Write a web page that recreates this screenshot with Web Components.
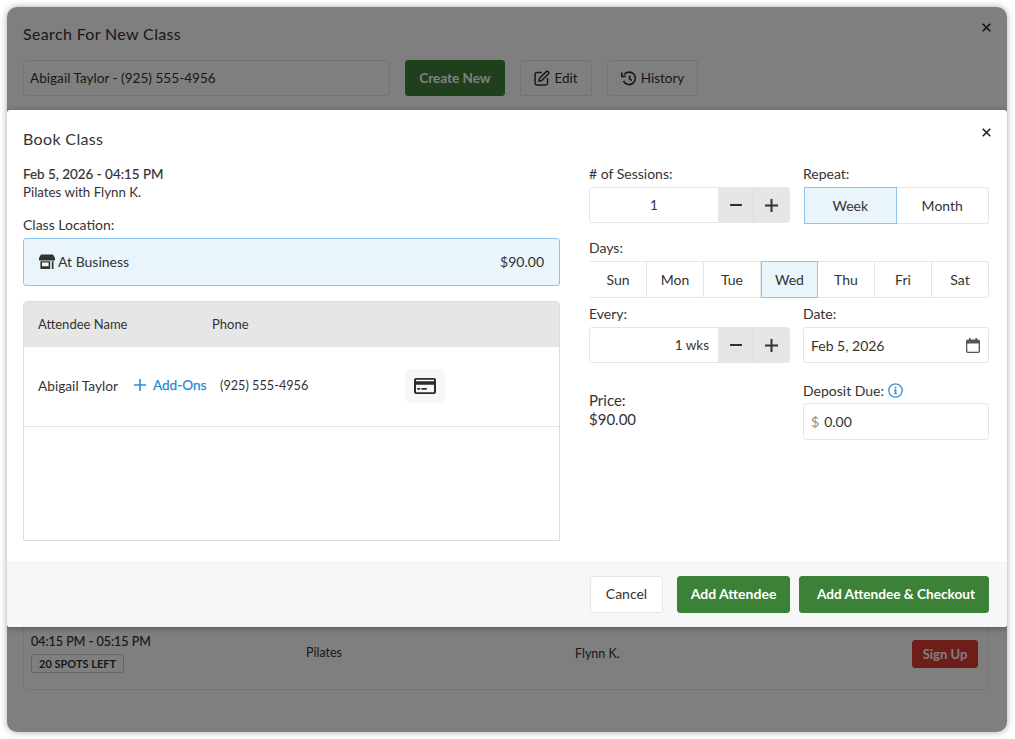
<!DOCTYPE html>
<html>
<head>
<meta charset="utf-8">
<title>Book Class</title>
<style>
    html, body { margin: 0; background: #fff; }
    body {
        padding: 7px 8px 7px 7px;
        font-family: 'Lato', 'Liberation Sans', sans-serif;
        font-size: 14px;
        color: #333;
    }
</style>
</head>
<body>
<class-window></class-window>

<script>
const ICONS = {
    close: `<svg width="9" height="9" viewBox="0 0 10 10"><path d="M.8.8l8.4 8.4M9.2.8L.8 9.2" stroke="currentColor" stroke-width="1.8" fill="none"/></svg>`,
    edit: `<svg width="16" height="16" viewBox="0 0 15 15" fill="none" stroke="currentColor" stroke-width="1.4"><path d="M7.4 2.3H2.6A1.6 1.6 0 0 0 1 3.9v8.5A1.6 1.6 0 0 0 2.6 14h8.5a1.6 1.6 0 0 0 1.6-1.6V7.6"/><path d="M5.2 7.8l6.3-6.3a1.2 1.2 0 0 1 1.7 0l.4.4a1.2 1.2 0 0 1 0 1.7L7.3 9.9l-2.6.5z"/></svg>`,
    history: `<svg width="16" height="15" viewBox="0 0 16 15" fill="none" stroke="currentColor" stroke-width="1.7"><path d="M3.2 3.6A6.2 6.2 0 1 1 2.5 9.8"/><path d="M.8 1.4v3.9h3.9"/><path d="M8.6 4.4v3.5l2.3 1.6"/></svg>`,
    store: `<svg width="16" height="15" viewBox="0 0 16 15"><path fill="currentColor" d="M2 .5h12l2 3.6v2.4H0V4.1z"/><path fill="currentColor" fill-rule="evenodd" d="M1.4 7.2h9.8v7.8H1.4zM3 8.6v3.6h6.6V8.6z"/><rect fill="currentColor" x="12.8" y="7.2" width="1.7" height="7.8"/></svg>`,
    card: `<svg width="22" height="16" viewBox="0 0 22 16"><path fill="currentColor" fill-rule="evenodd" d="M2 0h18a2 2 0 0 1 2 2v12a2 2 0 0 1-2 2H2a2 2 0 0 1-2-2V2a2 2 0 0 1 2-2zm0 1.7v1.6h18V1.7zm0 5v7.6h18V6.7z"/><rect fill="currentColor" x="3.2" y="10" width="3" height="1.7"/><rect fill="currentColor" x="7.4" y="10" width="5.4" height="1.7"/></svg>`,
    calendar: `<svg width="14" height="15" viewBox="0 0 14 15"><path fill="currentColor" fill-rule="evenodd" d="M3 0h1.6v1.6h4.8V0H11v1.6h1.2A1.8 1.8 0 0 1 14 3.4v9.8a1.8 1.8 0 0 1-1.8 1.8H1.8A1.8 1.8 0 0 1 0 13.2V3.4a1.8 1.8 0 0 1 1.8-1.8H3zM1.3 5.4v7.6c0 .4.3.7.7.7h10c.4 0 .7-.3.7-.7V5.4z"/></svg>`,
    info: `<svg width="15" height="15" viewBox="0 0 15 15"><circle cx="7.5" cy="7.5" r="6.7" fill="none" stroke="currentColor" stroke-width="1.3"/><circle cx="7.5" cy="4.4" r="1" fill="currentColor"/><path fill="currentColor" d="M6.1 6.3h2.3v3.9h.7v1.1H5.9v-1.1h.8V7.4h-.6z"/></svg>`,
    plus: `<svg width="12" height="12" viewBox="0 0 12 12"><path d="M6 0v12M0 6h12" stroke="currentColor" stroke-width="1.6" fill="none"/></svg>`,
    plusBold: `<svg width="13" height="13" viewBox="0 0 13 13"><path d="M6.5 0v13M0 6.5h13" stroke="currentColor" stroke-width="2" fill="none"/></svg>`,
    minus: `<svg width="12" height="12" viewBox="0 0 12 12"><path d="M0 6h12" stroke="currentColor" stroke-width="2" fill="none"/></svg>`
};

class UiButton extends HTMLElement {
    constructor() {
        super();
        this.attachShadow({ mode: 'open' });
    }

    connectedCallback() {
        this.shadowRoot.innerHTML = `
            <style>
                :host {
                    display: inline-flex;
                    box-sizing: border-box;
                    align-items: center;
                    justify-content: center;
                    gap: 4px;
                    height: 37px;
                    padding: 0 14px;
                    border-radius: 3px;
                    border: 1px solid #e6e6e6;
                    background: #fff;
                    color: #333;
                    font-size: 13.5px;
                    white-space: nowrap;
                }
                :host([kind="green"]) {
                    background: #3c8138;
                    border-color: #3c8138;
                    color: #fff;
                    font-weight: 700;
                }
                :host([kind="red"]) {
                    background: #dc3a33;
                    border-color: #dc3a33;
                    color: #fff;
                    font-size: 13px;
                    font-weight: 700;
                }
            </style>
            <slot></slot>
        `;
    }
}

class StepperInput extends HTMLElement {
    constructor() {
        super();
        this.attachShadow({ mode: 'open' });
    }

    connectedCallback() {
        const align = this.getAttribute('align') || 'center';
        this.shadowRoot.innerHTML = `
            <style>
                :host {
                    display: flex;
                    box-sizing: border-box;
                    height: 36px;
                    border: 1px solid #e6e6e6;
                    border-radius: 3px;
                    overflow: hidden;
                    background: #fff;
                }
                .value {
                    flex: 1;
                    display: flex;
                    align-items: center;
                    justify-content: ${align};
                    padding: 0 9px 1px;
                    font-size: 13.5px;
                }
                .btn {
                    width: 35px;
                    display: flex;
                    align-items: center;
                    justify-content: center;
                    background: #e6e6e6;
                    color: #333;
                }
                .btn + .btn { border-left: 1px solid #dcdcdc; }
            </style>
            <div class="value"><slot></slot></div>
            <div class="btn">${ICONS.minus}</div>
            <div class="btn">${ICONS.plusBold}</div>
        `;
    }
}

class SegmentedPicker extends HTMLElement {
    constructor() {
        super();
        this.attachShadow({ mode: 'open' });
    }

    connectedCallback() {
        const items = this.getAttribute('items').split(',');
        const active = this.getAttribute('active');
        const cells = items.map((item) => `<div class="cell ${item === active ? 'on' : ''}">${item}</div>`).join('');
        this.shadowRoot.innerHTML = `
            <style>
                :host {
                    display: grid;
                    grid-template-columns: repeat(${items.length}, 1fr);
                    box-sizing: border-box;
                    height: 37px;
                    margin-left: 1px;
                    font-size: 14px;
                    border-radius: 3px;
                    background: #fff;
                }
                .cell {
                    display: flex;
                    align-items: center;
                    justify-content: center;
                    border: 1px solid #e6e6e6;
                    border-left-width: 0;
                }
                .cell:first-child { border-left-width: 1px; border-radius: 3px 0 0 3px; }
                .cell:last-child { border-radius: 0 3px 3px 0; }
                .cell.on {
                    background: #e9f4fb;
                    border: 1px solid #8fc5ec;
                }
            </style>
            ${cells}
        `;
    }
}

class FormField extends HTMLElement {
    constructor() {
        super();
        this.attachShadow({ mode: 'open' });
    }

    connectedCallback() {
        this.shadowRoot.innerHTML = `
            <style>
                :host { display: flex; flex-direction: column; gap: 5px; min-width: 0; }
                .label {
                    display: flex;
                    align-items: center;
                    gap: 4px;
                    height: 17px;
                    line-height: 17px;
                    font-size: 14px;
                }
                .info { display: flex; color: #3d8fd6; }
            </style>
            <div class="label">${this.getAttribute('label')}${this.hasAttribute('info') ? `<span class="info">${ICONS.info}</span>` : ''}</div>
            <slot></slot>
        `;
    }
}

class AttendeeTable extends HTMLElement {
    constructor() {
        super();
        this.attachShadow({ mode: 'open' });
    }

    connectedCallback() {
        this.shadowRoot.innerHTML = `
            <style>
                :host {
                    display: block;
                    box-sizing: border-box;
                    height: 240px;
                    border: 1px solid #dcdcdc;
                    border-radius: 4px 4px 0 0;
                    font-size: 13px;
                }
                .head, .row {
                    display: grid;
                    align-items: center;
                    padding-left: 14px;
                    box-sizing: border-box;
                }
                .head {
                    grid-template-columns: 174px 1fr;
                    height: 45px;
                    padding-bottom: 2px;
                    background: #e6e6e6;
                    border-radius: 3px 3px 0 0;
                }
                .row {
                    grid-template-columns: 182px 184px 40px;
                    height: 80px;
                    padding-bottom: 3px;
                    border-bottom: 1px solid #e3e3e3;
                }
                .name { display: flex; align-items: center; gap: 16px; font-size: 13.7px; }
                .addons {
                    display: flex;
                    align-items: center;
                    gap: 7px;
                    color: #2a8bd6;
                    font-size: 13.6px;
                    -webkit-text-stroke: .25px #2a8bd6;
                    white-space: nowrap;
                }
                .phone { font-size: 12.7px; }
                .card {
                    display: flex;
                    align-items: center;
                    justify-content: center;
                    width: 40px;
                    height: 34px;
                    margin: 2px 0 0 1px;
                    border-radius: 5px;
                    background: #f7f7f7;
                    color: #2b2b2b;
                }
            </style>
            <div class="head"><span>Attendee Name</span><span>Phone</span></div>
            <div class="row">
                <div class="name"><span>Abigail Taylor</span><span class="addons">${ICONS.plus}Add-Ons</span></div>
                <span class="phone">(925) 555-4956</span>
                <span class="card">${ICONS.card}</span>
            </div>
        `;
    }
}

class BookClassModal extends HTMLElement {
    constructor() {
        super();
        this.attachShadow({ mode: 'open' });
    }

    connectedCallback() {
        this.shadowRoot.innerHTML = `
            <style>
                :host {
                    position: absolute;
                    top: 103px;
                    left: 0;
                    right: 0;
                    height: 517px;
                    display: flex;
                    flex-direction: column;
                    background: #fff;
                    border-radius: 3px;
                    box-shadow: 0 1px 6px rgba(0, 0, 0, .35);
                    color: #333;
                }
                header {
                    display: flex;
                    justify-content: space-between;
                    align-items: center;
                    height: 56px;
                    padding: 0 17px 0 16px;
                    font-size: 16px;
                    letter-spacing: .35px;
                    margin-bottom: -1px;
                }
                .close { display: flex; color: #222; margin: -12px -1px 0 0; }
                main {
                    flex: 1;
                    display: grid;
                    grid-template-columns: 537px 400px;
                    justify-content: space-between;
                    padding: 0 18px 0 16px;
                    align-items: start;
                }
                .when { line-height: 18px; margin: 0 0 15px; font-size: 13.3px; }
                .when b { font-weight: 400; font-size: 13.4px; display: block; -webkit-text-stroke: .2px #333; }
                .loc-label { line-height: 17px; margin-bottom: 5px; }
                .location {
                    box-sizing: border-box;
                    display: flex;
                    justify-content: space-between;
                    align-items: center;
                    height: 48px;
                    padding: 0 15px 1px;
                    margin-bottom: 15px;
                    background: #e9f4fb;
                    border: 1px solid #8fc5ec;
                    border-radius: 3px;
                }
                .location span { display: flex; align-items: center; gap: 3px; }
                .right {
                    display: grid;
                    grid-template-columns: 201px 186px;
                    column-gap: 13px;
                    row-gap: 7px;
                }
                .wide { grid-column: 1 / -1; margin-top: 8px; }
                .low { margin-top: 11px; }
                .deposit { margin-top: 12px; gap: 4px; }
                .box {
                    box-sizing: border-box;
                    display: flex;
                    align-items: center;
                    justify-content: space-between;
                    height: 37px;
                    padding: 0 7px;
                    background: #fff;
                    border: 1px solid #e6e6e6;
                    border-radius: 3px;
                }
                .box.date { height: 36px; padding-right: 8px; }
                .dollar { color: #8a8a8a; margin-right: 5px; }
                .price { line-height: 19px; padding-top: 10px; font-size: 15px; }
                .cal { display: flex; color: #555; }
                footer {
                    display: flex;
                    justify-content: flex-end;
                    align-items: center;
                    gap: 14px;
                    height: 66px;
                    padding: 1px 18px 0 0;
                    box-sizing: border-box;
                    background: #f7f7f7;
                    border-radius: 0 0 3px 3px;
                }
                footer ui-button { padding-bottom: 2px; }
                footer .last { margin-left: -5px; padding-left: 18px; padding-bottom: 1px; }
            </style>
            <header><span>Book Class</span><span class="close">${ICONS.close}</span></header>
            <main>
                <section>
                    <div class="when"><b>Feb 5, 2026 - 04:15 PM</b>Pilates with Flynn K.</div>
                    <div class="loc-label">Class Location:</div>
                    <div class="location"><span>${ICONS.store}At Business</span><div>$90.00</div></div>
                    <attendee-table></attendee-table>
                </section>
                <section class="right">
                    <form-field label="# of Sessions:"><stepper-input>1</stepper-input></form-field>
                    <form-field label="Repeat:"><segmented-picker items="Week,Month" active="Week"></segmented-picker></form-field>
                    <form-field class="wide" label="Days:"><segmented-picker items="Sun,Mon,Tue,Wed,Thu,Fri,Sat" active="Wed"></segmented-picker></form-field>
                    <form-field label="Every:"><stepper-input align="flex-end">1 wks</stepper-input></form-field>
                    <form-field label="Date:"><div class="box date"><span>Feb 5, 2026</span><span class="cal">${ICONS.calendar}</span></div></form-field>
                    <div class="price low">Price:<br>$90.00</div>
                    <form-field class="deposit" label="Deposit Due:" info><div class="box" style="justify-content:flex-start"><span class="dollar">$</span><span>0.00</span></div></form-field>
                </section>
            </main>
            <footer>
                <ui-button style="width:73px;font-size:14px">Cancel</ui-button>
                <ui-button kind="green" style="width:113px;font-size:14px">Add Attendee</ui-button>
                <ui-button class="last" kind="green" style="width:190px;font-size:13.65px">Add Attendee &amp; Checkout</ui-button>
            </footer>
        `;
    }
}

class SearchPanel extends HTMLElement {
    constructor() {
        super();
        this.attachShadow({ mode: 'open' });
    }

    connectedCallback() {
        this.shadowRoot.innerHTML = `
            <style>
                :host {
                    display: flex;
                    flex-direction: column;
                    height: 100%;
                    box-sizing: border-box;
                    padding: 0 18px 42px 16px;
                    color: #333;
                }
                header {
                    display: flex;
                    justify-content: space-between;
                    align-items: center;
                    height: 53px;
                    font-size: 16px;
                    letter-spacing: .35px;
                }
                .close { display: flex; color: #222; margin: -13px -2px 0 0; }
                .search { display: flex; align-items: center; height: 36px; }
                .field {
                    box-sizing: border-box;
                    width: 367px;
                    height: 36px;
                    display: flex;
                    align-items: center;
                    padding: 0 6px;
                    border: 1px solid #e6e6e6;
                    border-radius: 3px;
                    margin-right: 15px;
                    font-size: 13.6px;
                }
                .search ui-button { margin-right: 15px; height: 36px; }
                .icon { display: flex; }
                .list {
                    margin-top: auto;
                    height: 100px;
                    box-sizing: border-box;
                    border: 1px solid #ebebeb;
                    border-radius: 4px;
                    display: grid;
                    grid-template-columns: 275px 269px 1fr auto;
                    align-items: center;
                    padding: 30px 10px 2px 7px;
                    font-size: 12.5px;
                }
                .slot { margin-bottom: 2px; }
                .time { line-height: 18px; -webkit-text-stroke: .2px #333; }
                .spots {
                    display: inline-block;
                    box-sizing: border-box;
                    height: 19px;
                    line-height: 17px;
                    margin-top: 3px;
                    padding: 0 7px;
                    font-size: 11px;
                    font-weight: 700;
                    border: 1px solid #ccc;
                    border-radius: 2px;
                }
            </style>
            <header><span>Search For New Class</span><span class="close">${ICONS.close}</span></header>
            <div class="search">
                <div class="field">Abigail Taylor - (925) 555-4956</div>
                <ui-button kind="green" style="width:100px">Create New</ui-button>
                <ui-button style="width:72px"><span class="icon">${ICONS.edit}</span>Edit</ui-button>
                <ui-button style="width:91px"><span class="icon">${ICONS.history}</span>History</ui-button>
            </div>
            <div class="list">
                <div class="slot"><div class="time">04:15 PM - 05:15 PM</div><span class="spots">20 SPOTS LEFT</span></div>
                <div style="margin-bottom:3px">Pilates</div>
                <div style="margin-bottom:2px">Flynn K.</div>
                <ui-button kind="red" style="width:66px;height:28px">Sign Up</ui-button>
            </div>
        `;
    }
}

class ClassWindow extends HTMLElement {
    constructor() {
        super();
        this.attachShadow({ mode: 'open' });
    }

    connectedCallback() {
        this.shadowRoot.innerHTML = `
            <style>
                :host {
                    display: block;
                    position: relative;
                    width: 1000px;
                    height: 725px;
                    background: #fff;
                    border-radius: 10px;
                    box-shadow: 0 0 7px rgba(0, 0, 0, .35);
                    overflow: hidden;
                }
                .backdrop {
                    position: absolute;
                    inset: 0;
                    background: rgba(0, 0, 0, .5);
                }
            </style>
            <search-panel></search-panel>
            <div class="backdrop"></div>
            <book-class-modal></book-class-modal>
        `;
    }
}

customElements.define('ui-button', UiButton);
customElements.define('stepper-input', StepperInput);
customElements.define('segmented-picker', SegmentedPicker);
customElements.define('form-field', FormField);
customElements.define('attendee-table', AttendeeTable);
customElements.define('book-class-modal', BookClassModal);
customElements.define('search-panel', SearchPanel);
customElements.define('class-window', ClassWindow);
</script>
</body>
</html>
